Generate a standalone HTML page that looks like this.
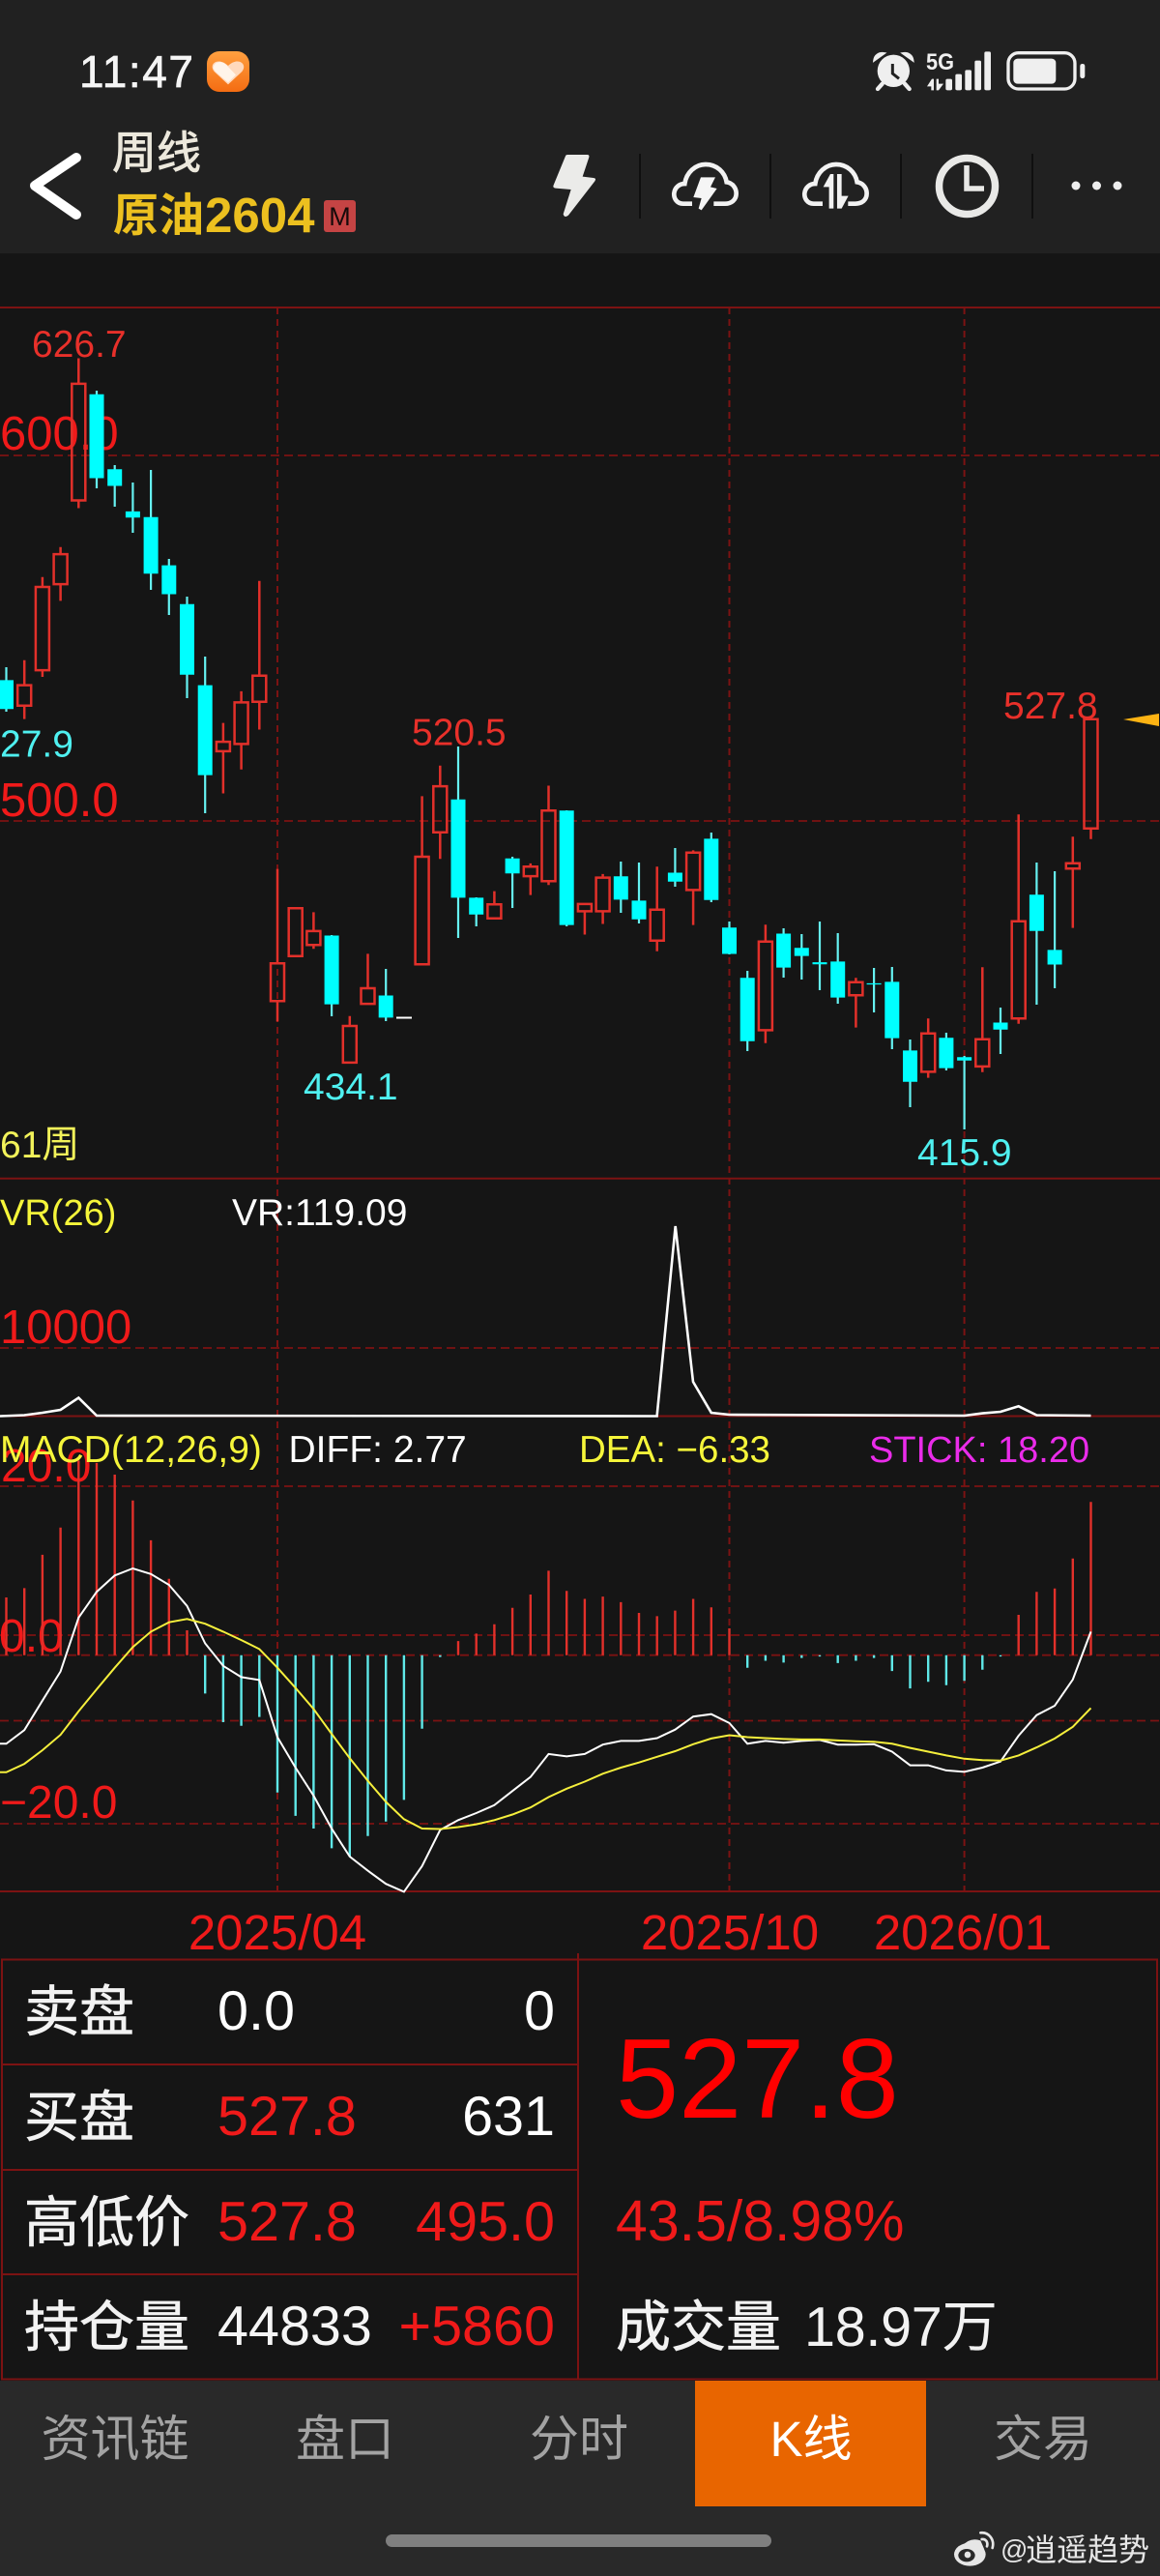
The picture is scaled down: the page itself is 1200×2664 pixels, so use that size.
<!DOCTYPE html>
<html lang="zh">
<head>
<meta charset="utf-8">
<title>周线 原油2604</title>
<style>
html,body{margin:0;padding:0;background:#151515;}
body{width:1200px;height:2664px;overflow:hidden;}
svg{display:block;}
text{font-family:"Liberation Sans","Noto Sans CJK SC",sans-serif;}
</style>
</head>
<body>
<svg width="1200" height="2664" viewBox="0 0 1200 2664" xmlns="http://www.w3.org/2000/svg">
<rect width="1200" height="2664" fill="#151515"/>
<rect width="1200" height="262" fill="#212121"/>

<!-- status bar -->
<text x="82" y="90" font-size="46" fill="#f5f5f5" stroke="#f5f5f5" stroke-width=".7" textLength="118" lengthAdjust="spacing">11:47</text>
<defs><linearGradient id="og" x1="0" y1="0" x2="0" y2="1"><stop offset="0" stop-color="#ffa040"/><stop offset="1" stop-color="#f46c12"/></linearGradient></defs>
<rect x="214" y="53" width="44" height="42" rx="13" fill="url(#og)"/>
<g transform="translate(70,40) scale(.3333)">
<path d="M498,142 L455,102 C435,78 468,55 498,84 C528,55 560,78 541,102 Z" fill="#ffd9bd"/>
<path d="M452,92 C452,72 478,64 495,84 L522,112 L498,136 L458,102 Z" fill="#fff4ea"/>
</g>
<g transform="translate(890,40) scale(.3333)" fill="#efefef">
<circle cx="103" cy="100" r="50"/>
<path d="M44,66 C46,52 58,44 72,46 Z M162,66 C160,52 148,44 134,46 Z" stroke="#efefef" stroke-width="8"/>
<path d="M68,140 L54,156 M138,140 L152,156" stroke="#efefef" stroke-width="13" stroke-linecap="round"/>
<path d="M100,78 V108 L120,124" fill="none" stroke="#212121" stroke-width="9"/>
<path d="M207,148 L222,125 H228 V160 H220 V148 Z M236,125 H243 V140 H258 L243,160 H236 Z"/>
<rect x="265" y="125" width="20" height="35" rx="5"/>
<rect x="295" y="110" width="20" height="50" rx="5"/>
<rect x="325" y="97" width="20" height="63" rx="5"/>
<rect x="355" y="68" width="20" height="92" rx="5"/>
<rect x="385" y="40" width="20" height="120" rx="5"/>
<rect x="459" y="44" width="207" height="112" rx="32" fill="none" stroke="#efefef" stroke-width="10"/>
<rect x="475" y="62" width="132" height="78" rx="13"/>
<rect x="682" y="78" width="15" height="45" rx="7"/>
</g>
<text x="958" y="72" font-size="24" font-weight="bold" fill="#efefef" textLength="29" lengthAdjust="spacingAndGlyphs">5G</text>

<!-- header -->
<path d="M79,163 L36,192 L79,222" fill="none" stroke="#fff" stroke-width="10" stroke-linecap="round" stroke-linejoin="round"/>
<text x="116" y="174" font-size="46" fill="#ece8dc" stroke="#ece8dc" stroke-width=".9">周线</text>
<text x="117" y="239" font-size="47" fill="#ecc01f" font-weight="bold">原油</text>
<text x="212" y="240" font-size="51" fill="#ecc01f" font-weight="bold">2604</text>
<rect x="335" y="207" width="33" height="33" rx="3" fill="#c54444"/>
<text x="351.5" y="233" font-size="27" fill="#160a0a" text-anchor="middle">M</text>

<g transform="translate(560,150) scale(.3333)">
<path d="M75,34 Q76,30 82,30 H142 Q150,30 148,38 L128,98 L162,102 Q172,103 166,112 L84,218 Q72,228 68,214 L92,138 L44,134 Q34,132 38,124 Z" fill="#ebebe9"/>
<g fill="none" stroke="#f2f2f2" stroke-width="14">
<path d="M468,182 H440 C420,182 411,165 412,150 C414,132 428,120 445,120 C450,85 478,60 510,60 C545,60 570,85 575,115 C595,118 605,135 605,150 C605,170 590,182 570,182 H535"/>
<path d="M873,182 H845 C825,182 816,165 817,150 C819,132 833,120 850,120 C855,85 883,60 915,60 C950,60 975,85 980,115 C1000,118 1010,135 1010,150 C1010,170 995,182 975,182 H952"/>
</g>
<path d="M495,100 H540 L525,130 L545,135 L497,202 L488,197 L497,165 L472,162 Z" fill="#f5f5f5"/>
<path d="M893,197 H907 V90 H897 L875,130 H893 Z M918,90 H932 V158 H953 L932,197 H918 Z" fill="#f2f2f2"/>
</g>
<path d="M662,159V226M797,159V226M932,159V226M1068,159V226" stroke="#0f0f0f" stroke-width="2"/>
<circle cx="1000.5" cy="192.5" r="29" fill="none" stroke="#e9e9e7" stroke-width="7.5"/>
<path d="M1000,171V195H1018" fill="none" stroke="#e9e9e7" stroke-width="5.5"/>
<circle cx="1113" cy="192" r="4.5" fill="#eee"/><circle cx="1134.5" cy="192" r="4.5" fill="#eee"/><circle cx="1156" cy="192" r="4.5" fill="#eee"/>

<!-- grid -->
<g stroke="#7c1212" stroke-width="2" fill="none">
<path d="M0,318H1200M0,1218.7H1200M0,1464.5H1200M0,1956H1200"/>
<path stroke-dasharray="7 5" d="M287,318V1956M754.5,318V1956M997.6,318V1956"/>
<path stroke-dasharray="9 5" stroke-width="1.8" d="M0,471H1200M0,849H1200M0,1394H1200M0,1537H1200M0,1691H1200M0,1711.7H1200M0,1779.5H1200M0,1886H1200"/>
</g>

<!-- axis labels under candles -->
<g fill="#f01a1a" font-size="49">
<text x="0" y="465">600.0</text>
<text x="0" y="844">500.0</text>
<text x="0" y="1389">10000</text>
<text x="1" y="1532" font-size="48">20.0</text>
<text x="-1" y="1708" font-size="48">0.0</text>
<text x="0" y="1880" font-size="48">−20.0</text>
</g>

<!-- cyan wicks -->
<path fill="none" stroke="#66f2f2" stroke-width="2.2" d="M6.5,690V736M100,404V505M118.7,481V524M137.4,499V551M156.1,486V610M174.8,578V636M193.5,617V722M212.2,679V841M343.1,967V1051M399.2,1002V1056M474,772V970M492.7,928V958M530.1,886V939M586.2,838V958M642.3,891V944M661,892V955M698.4,877V917M735.8,861V933M754.5,953V987M773.2,1004V1087M810.6,960V1011M829.3,966V1013M848,953V1024M866.7,965V1038M904.1,1001V1047M922.8,1000V1085M941.5,1075V1145M978.9,1068V1107M997.6,1092V1168M1035,1042V1090M1072.4,892V1039M1091.1,901V1022"/>
<!-- cyan bodies -->
<path fill="#00ffff" d="M-1,703.4H14V733.3H-1ZM92.5,407.8H107.5V494.5H92.5ZM111.2,485.3H126.2V502.5H111.2ZM129.9,528.9H144.9V535.3H129.9ZM148.6,534.7H163.6V593.2H148.6ZM167.3,584.6H182.3V614.5H167.3ZM186,624.8H201V697.7H186ZM204.7,708.6H219.7V801.6H204.7ZM335.6,967.5H350.6V1038.6H335.6ZM391.7,1029.5H406.7V1052.4H391.7ZM466.5,826.8H481.5V928.4H466.5ZM485.2,928.4H500.2V945.7H485.2ZM522.6,887.7H537.6V903.2H522.6ZM578.7,838.3H593.7V956.6H578.7ZM634.8,906.3H649.8V930.4H634.8ZM653.5,931.4H668.5V950.7H653.5ZM690.9,902.5H705.9V911.8H690.9ZM728.3,867.4H743.3V930.7H728.3ZM747,959.3H762V986.5H747ZM765.7,1011.3H780.7V1076.7H765.7ZM803.1,965.5H818.1V1000.6H803.1ZM821.8,980.3H836.8V988.6H821.8ZM840.5,995.1H855.5V997.2H840.5ZM859.2,994.4H874.2V1031.6H859.2ZM896.6,1016.9H911.6V1018.1H896.6ZM915.3,1015.4H930.3V1073.6H915.3ZM934,1086.4H949V1118.8H934ZM971.4,1073.3H986.4V1104.6H971.4ZM990.1,1093.3H1005.1V1096.7H990.1ZM1027.5,1057.5H1042.5V1064.7H1027.5ZM1064.9,925.2H1079.9V962.8H1064.9ZM1083.6,982.4H1098.6V997.5H1083.6Z"/>
<!-- red candles -->
<path fill="none" stroke="#e2302a" stroke-width="2.5" d="M25.2,682.8V708.6M25.2,729.8V743.6M18.2,708.6H32.2V729.8H18.2ZM43.9,596.7V607M43.9,693.1V700M36.9,607H50.9V693.1H36.9ZM62.6,565.7V573.1M62.6,604.1V621.4M55.6,573.1H69.6V604.1H55.6ZM81.3,370.5V396.9M81.3,517.5V525.5M74.3,396.9H88.3V517.5H74.3ZM230.9,747.6V767.1M230.9,776.9V820.5M223.9,767.1H237.9V776.9H223.9ZM249.6,714.9V726.4M249.6,769.4V795.8M242.6,726.4H256.6V769.4H242.6ZM268.3,600.7V698.8M268.3,725.8V754.5M261.3,698.8H275.3V725.8H261.3ZM287,898.6V996.2M287,1035.2V1056.4M280,996.2H294V1035.2H280ZM298.7,939.3H312.7V988.7H298.7ZM324.4,943.4V962.9M324.4,977.2V981.2M317.4,962.9H331.4V977.2H317.4ZM361.8,1050.7V1061M354.8,1061H368.8V1098.9H354.8ZM380.5,986.4V1022M373.5,1022H387.5V1038.1H373.5ZM436.6,823.4V886M429.6,886H443.6V997.3H429.6ZM455.3,791.8V813.1M455.3,860.7V888.3M448.3,813.1H462.3V860.7H448.3ZM511.4,921.6V935.3M504.4,935.3H518.4V949.7H504.4ZM548.8,892.9V896.3M548.8,906.1V925.6M541.8,896.3H555.8V906.1H541.8ZM567.5,812.5V838.3M567.5,911.2V915.2M560.5,838.3H574.5V911.2H560.5ZM604.9,942.4V966.5M597.9,934.9H611.9V942.4H597.9ZM623.6,903.9V907.6M623.6,942.4V955.5M616.6,907.6H630.6V942.4H616.6ZM679.7,896.3V940.7M679.7,972.7V983.8M672.7,940.7H686.7V972.7H672.7ZM717.1,879.4V881.8M717.1,920.4V956.6M710.1,881.8H724.1V920.4H710.1ZM791.9,956.2V973.8M791.9,1065.4V1078.8M784.9,973.8H798.9V1065.4H784.9ZM885.4,1011.3V1015.8M885.4,1029.2V1062.6M878.4,1015.8H892.4V1029.2H878.4ZM960.2,1053.3V1068.8M960.2,1108.4V1114.6M953.2,1068.8H967.2V1108.4H953.2ZM1016.3,1000.3V1074.7M1016.3,1102.9V1108.8M1009.3,1074.7H1023.3V1102.9H1009.3ZM1053.7,842.2V952.8M1053.7,1053.3V1058.8M1046.7,952.8H1060.7V1053.3H1046.7ZM1109.8,865.3V892.8M1109.8,898.3V959.6M1102.8,892.8H1116.8V898.3H1102.8ZM1128.5,856.7V867.7M1121.5,743.7H1135.5V856.7H1121.5Z"/>
<path d="M410,1052.5H426" stroke="#fff" stroke-width="2"/>
<path d="M1162,744 L1199,738 V751 Z" fill="#fdb313"/>

<!-- chart value labels -->
<g font-size="39">
<text x="33" y="369" fill="#e8302a">626.7</text>
<text x="0" y="782.5" fill="#4ff0f0">27.9</text>
<text x="426" y="770.5" fill="#e8302a">520.5</text>
<text x="314" y="1137" fill="#4ff0f0">434.1</text>
<text x="1038" y="743" fill="#e8302a">527.8</text>
<text x="949" y="1205" fill="#4ff0f0">415.9</text>
<text x="0" y="1197" font-size="39" fill="#f2f25a">61周</text>
<text x="0" y="1267" font-size="38" fill="#f5f53a">VR(26)</text>
<text x="240" y="1267" font-size="39">
<tspan fill="#fff">VR:119.09</tspan></text>
<text x="0" y="1512" font-size="39" fill="#f5f53a">MACD(12,26,9)</text>
<text x="298.5" y="1512" font-size="39" fill="#fff">DIFF: 2.77</text>
<text x="599" y="1512" font-size="38.5" fill="#f5f53a">DEA: −6.33</text>
<text x="899" y="1512" font-size="38" fill="#ea2cea">STICK: 18.20</text>
</g>

<!-- VR line -->
<polyline fill="none" stroke="#fff" stroke-width="2.6" points="0,1464.5 25.2,1463.5 43.9,1461 62.6,1458 81.3,1445.6 100,1464 679.6,1464.5 698.7,1268 717,1429 735.8,1461 754.5,1463 997.6,1464 1016.3,1461.6 1035,1460 1053.7,1454.3 1072.4,1463.5 1128.5,1464"/>

<!-- MACD histogram -->
<path fill="none" stroke="#e2302a" stroke-width="2.4" d="M6.5,1711.7V1652M25.2,1711.7V1642.4M43.9,1711.7V1607.9M62.6,1711.7V1579.8M81.3,1711.7V1510.5M100,1711.7V1512.9M118.7,1711.7V1525M137.4,1711.7V1551.7M156.1,1711.7V1592.9M174.8,1711.7V1632.7M193.5,1711.7V1686M474,1711.7V1697.1M492.7,1711.7V1689.4M511.4,1711.7V1679.7M530.1,1711.7V1662.7M548.8,1711.7V1649M567.5,1711.7V1624.4M586.2,1711.7V1645.3M604.9,1711.7V1653.5M623.6,1711.7V1651.1M642.3,1711.7V1656.9M661,1711.7V1668M679.7,1711.7V1671.4M698.4,1711.7V1665.6M717.1,1711.7V1653.5M735.8,1711.7V1662.2M754.5,1711.7V1684M1053.7,1711.7V1670M1072.4,1711.7V1646.2M1091.1,1711.7V1642.8M1109.8,1711.7V1611.8M1128.5,1711.7V1553.2"/>
<path fill="none" stroke="#5fe8e8" stroke-width="2.4" d="M212.2,1711.7V1751.4M230.9,1711.7V1781M249.6,1711.7V1784.8M268.3,1711.7V1775.6M287,1711.7V1853.7M305.7,1711.7V1877.9M324.4,1711.7V1891M343.1,1711.7V1911.4M361.8,1711.7V1920M380.5,1711.7V1898.8M399.2,1711.7V1883.7M417.9,1711.7V1861.4M436.6,1711.7V1787.8M455.3,1711.7V1713.6M773.2,1711.7V1724.7M791.9,1711.7V1717.5M810.6,1711.7V1719.4M829.3,1711.7V1714.6M848,1711.7V1713.1M866.7,1711.7V1719.9M885.4,1711.7V1717.5M904.1,1711.7V1714.6M922.8,1711.7V1728.1M941.5,1711.7V1746.1M960.2,1711.7V1739.3M978.9,1711.7V1742.7M997.6,1711.7V1738.3M1016.3,1711.7V1726.7M1035,1711.7V1713.1"/>
<!-- DIFF / DEA -->
<polyline fill="none" stroke="#fff" stroke-width="2" points="0,1803.3 6.5,1803.3 25.2,1789.2 43.9,1758.7 62.6,1728.6 81.3,1672.9 100,1646.2 118.7,1629.3 137.4,1622 156.1,1627.8 174.8,1639 193.5,1660.8 212.2,1699.5 230.9,1722.8 249.6,1734.4 268.3,1737.4 287,1796.5 305.7,1828 324.4,1857 343.1,1891 361.8,1920 380.5,1934.6 399.2,1948.2 417.9,1956.4 436.6,1929.8 455.3,1892.5 474,1882.3 492.7,1875 511.4,1866.8 530.1,1852.2 548.8,1837.7 567.5,1813.9 586.2,1816.4 604.9,1813.9 623.6,1804.2 642.3,1800.4 661,1800.4 679.7,1797.5 698.4,1788.7 717.1,1775.2 735.8,1772.7 754.5,1781.9 773.2,1803.3 791.9,1800.4 810.6,1802.3 829.3,1800.4 848,1799.4 866.7,1804.2 885.4,1804.2 904.1,1803.8 922.8,1811.5 941.5,1825.6 960.2,1825.6 978.9,1830.9 997.6,1832.4 1016.3,1828 1035,1821.7 1053.7,1795 1072.4,1773.7 1091.1,1764 1109.8,1736.9 1128.5,1687.4"/>
<polyline fill="none" stroke="#f5ef3c" stroke-width="2" points="0,1832.8 6.5,1832.8 25.2,1824.1 43.9,1810 62.6,1794.1 81.3,1769.8 100,1747 118.7,1724.7 137.4,1703.4 156.1,1687.4 174.8,1677.7 193.5,1674.3 212.2,1679.2 230.9,1687.4 249.6,1696.1 268.3,1705.4 287,1724.7 305.7,1745.6 324.4,1767.4 343.1,1793.1 361.8,1818.3 380.5,1841.6 399.2,1863.4 417.9,1881.3 436.6,1891 455.3,1891.5 474,1889.5 492.7,1886.6 511.4,1882.3 530.1,1876.5 548.8,1869.2 567.5,1858.5 586.2,1849.8 604.9,1842.5 623.6,1834.3 642.3,1828 661,1822.7 679.7,1816.8 698.4,1811 717.1,1803.8 735.8,1797.9 754.5,1794.5 773.2,1796.5 791.9,1797.5 810.6,1798.4 829.3,1798.9 848,1798.9 866.7,1799.9 885.4,1800.8 904.1,1801.3 922.8,1803.3 941.5,1807.6 960.2,1811.5 978.9,1815.4 997.6,1818.8 1016.3,1820.2 1035,1820.7 1053.7,1815.4 1072.4,1807.1 1091.1,1797.9 1109.8,1785.8 1128.5,1766.4"/>

<!-- dates -->
<g fill="#f01a1a" font-size="51" text-anchor="middle">
<text x="287" y="2016">2025/04</text>
<text x="755" y="2016">2025/10</text>
<text x="996" y="2016">2026/01</text>
</g>

<!-- table -->
<g fill="none" stroke="#7c1212" stroke-width="2">
<path d="M2,2026.5H1197V2460.5H2ZM598,2020V2460.5M2,2135H598M2,2244H598M2,2352H598"/>
</g>
<g font-size="57.5" fill="#f2f2f2">
<g stroke="#f2f2f2" stroke-width=".6" font-size="57">
<text x="25" y="2100">卖盘</text>
<text x="25" y="2209">买盘</text>
<text x="25" y="2318">高低价</text>
<text x="25" y="2426">持仓量</text>
</g>
<text x="225" y="2099" fill="#fff">0.0</text>
<text x="574" y="2099" fill="#fff" text-anchor="end">0</text>
<text x="225" y="2208" fill="#f01a1a">527.8</text>
<text x="574" y="2208" fill="#fff" text-anchor="end">631</text>
<text x="225" y="2317" fill="#f01a1a">527.8</text>
<text x="574" y="2317" fill="#f01a1a" text-anchor="end">495.0</text>
<text x="225" y="2425" fill="#f5f5f5">44833</text>
<text x="574" y="2425" fill="#f01a1a" text-anchor="end">+5860</text>
<text x="637" y="2190" font-size="117" fill="#ff0000">527.8</text>
<text x="637" y="2317" font-size="59" fill="#f01a1a">43.5/8.98%</text>
<text x="637" y="2426" font-size="57" stroke="#f2f2f2" stroke-width=".6">成交量</text>
<text x="832" y="2426" textLength="200" lengthAdjust="spacing">18.97万</text>
</g>

<!-- tab bar -->
<rect y="2462" width="1200" height="202" fill="#292929"/>
<rect x="719" y="2462" width="239" height="130" fill="#e86500"/>
<g font-size="51" fill="#a3a3a3" text-anchor="middle">
<text x="119" y="2540">资讯链</text>
<text x="357" y="2540">盘口</text>
<text x="599" y="2540">分时</text>
<text x="839" y="2540" fill="#fff">K线</text>
<text x="1079" y="2540">交易</text>
</g>
<rect x="399" y="2621" width="399" height="13" rx="6.5" fill="#7f7f7f"/>

<!-- watermark -->
<g transform="translate(975,2600) scale(.3333)">
<ellipse cx="85" cy="125" rx="49" ry="36" fill="#e6e6e6"/>
<path d="M60,100 Q85,70 118,82 L130,110 L100,100 Z" fill="#e6e6e6"/>
<ellipse cx="75" cy="128" rx="26" ry="20" fill="#292929"/>
<circle cx="78" cy="126" r="10" fill="#e6e6e6"/>
<path d="M118,58 C145,55 162,80 155,105 M122,78 C135,76 142,88 138,100" fill="none" stroke="#e6e6e6" stroke-width="8" stroke-linecap="round"/>
</g>
<text x="1035" y="2646" font-size="28" fill="#e6e6e6">@</text>
<text x="1061" y="2648" font-size="32" fill="#e6e6e6">逍遥趋势</text>
</svg>
</body>
</html>
